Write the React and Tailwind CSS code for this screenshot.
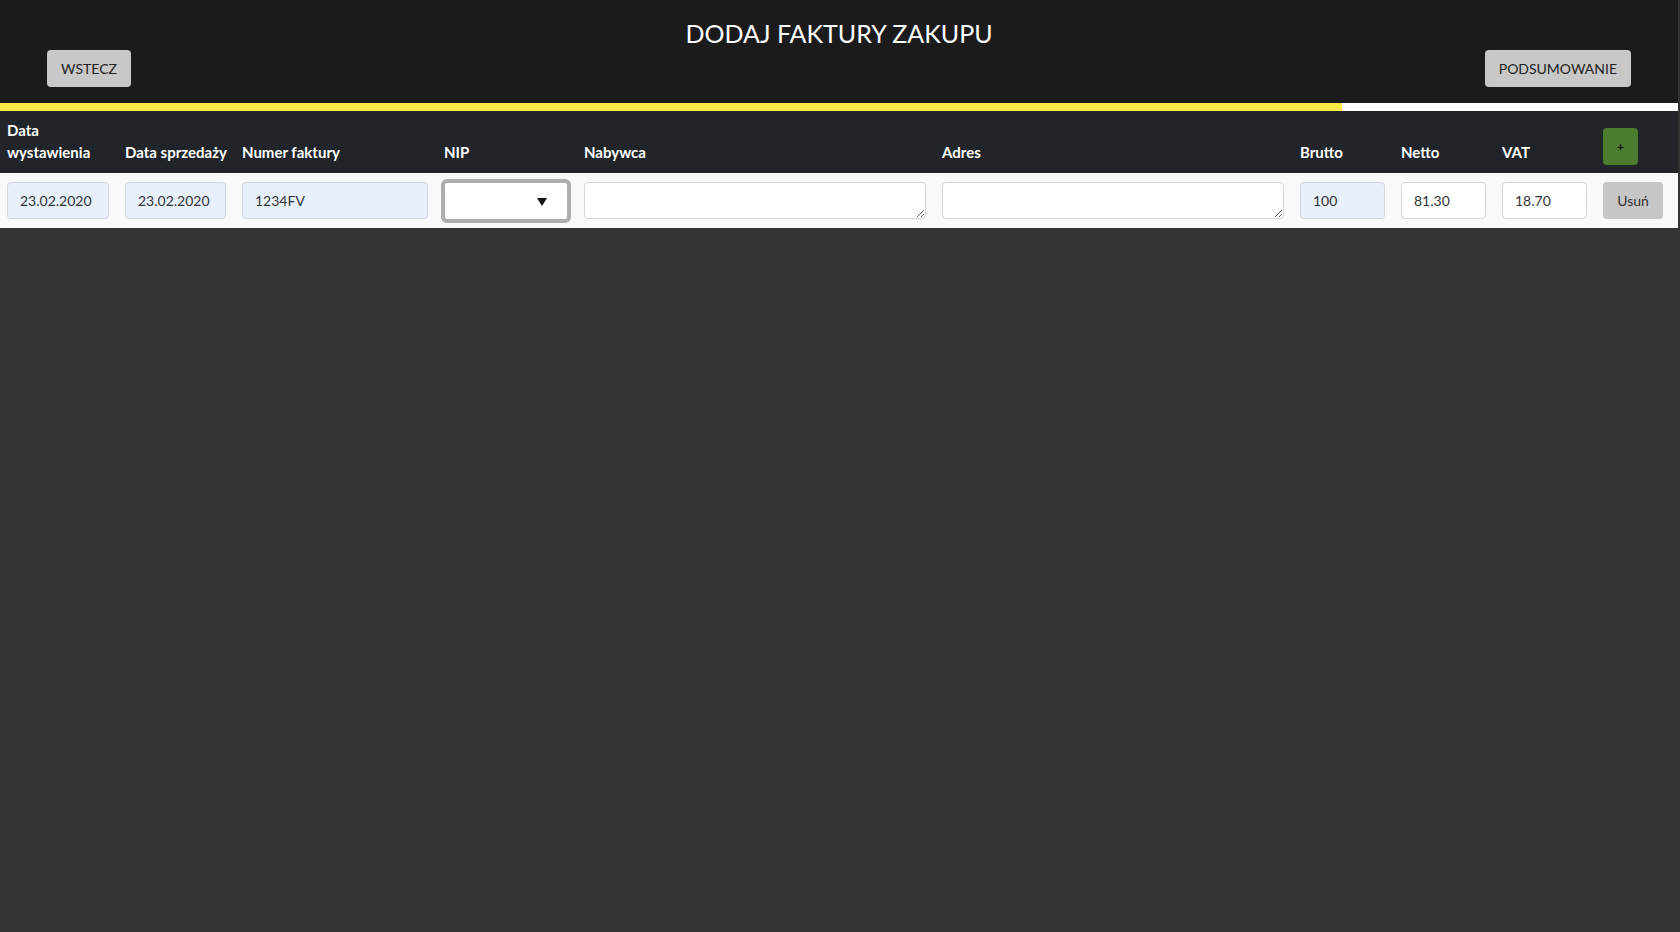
import React from 'react';

const cols = 'grid grid-cols-[102px_101px_186px_124px_342px_342px_85px_85px_85px_60px] gap-x-4 pl-[7px]';

const inputBase =
  'h-[37px] w-full rounded border border-[#d3d6da] px-3 text-[14px] text-[#333] outline-none';

const Field = ({ value, filled }) => (
  <input
    readOnly
    defaultValue={value}
    className={`${inputBase} ${filled ? 'bg-[#e8f0fe]' : 'bg-white'}`}
  />
);

const Area = () => (
  <textarea
    rows={1}
    className="block h-[37px] w-full rounded border border-[#d3d6da] bg-white px-3 text-[14px] outline-none"
  />
);

const App = () => {
  const progress = 80;

  return (
    <div className="min-h-[932px] bg-[#333333] font-['Lato','Noto_Sans',sans-serif]">
      <div className="w-[1678px]">
        {/* Header */}
        <header className="h-[103px] bg-[#1b1b1b] px-[47px] pt-[17px]">
          <h1 className="text-center text-[25px] leading-[32px] text-white">DODAJ FAKTURY ZAKUPU</h1>
          <div className="mt-[1px] flex justify-between">
            <button className="h-[37px] rounded bg-[#c8c8c8] px-[14px] text-[14px] text-[#222]">WSTECZ</button>
            <button className="h-[37px] rounded bg-[#c8c8c8] px-[14px] text-[14px] text-[#222]">PODSUMOWANIE</button>
          </div>
        </header>

        {/* Progress */}
        <div className="h-2 bg-white">
          <div className="h-full bg-[#fce94a]" style={{ width: `${progress}%` }} />
        </div>

        {/* Table head */}
        <div className={`${cols} items-end bg-[#212529] pt-2 pb-[10px] text-[15px] font-bold leading-[22px] text-white`}>
          <div>Data<br />wystawienia</div>
          <div className="whitespace-nowrap">Data sprzedaży</div>
          <div className="whitespace-nowrap">Numer faktury</div>
          <div>NIP</div>
          <div>Nabywca</div>
          <div>Adres</div>
          <div>Brutto</div>
          <div>Netto</div>
          <div>VAT</div>
          <div className="-mb-[2px]">
            <button className="h-[37px] w-[35px] rounded bg-[#4b7c2f] text-[12px] text-[#111]">+</button>
          </div>
        </div>

        {/* Row */}
        <div className={`${cols} items-center bg-[#f8f9fa] py-[9px]`}>
          <Field value="23.02.2020" filled />
          <Field value="23.02.2020" filled />
          <Field value="1234FV" filled />
          <div className="-mx-[3px] -my-[4px] flex h-[44px] items-center justify-end rounded-md border-[4px] border-[#adadad] bg-white pr-[20px]">
            <svg width="10" height="8" viewBox="0 0 10 8" className="mt-[3px]">
              <path d="M0 0h10L5 8z" fill="#111" />
            </svg>
          </div>
          <Area />
          <Area />
          <Field value="100" filled />
          <Field value="81.30" />
          <Field value="18.70" />
          <button className="h-[37px] rounded bg-[#c6c6c6] text-[14px] text-[#333]">Usuń</button>
        </div>
      </div>
    </div>
  );
};

export default App;
